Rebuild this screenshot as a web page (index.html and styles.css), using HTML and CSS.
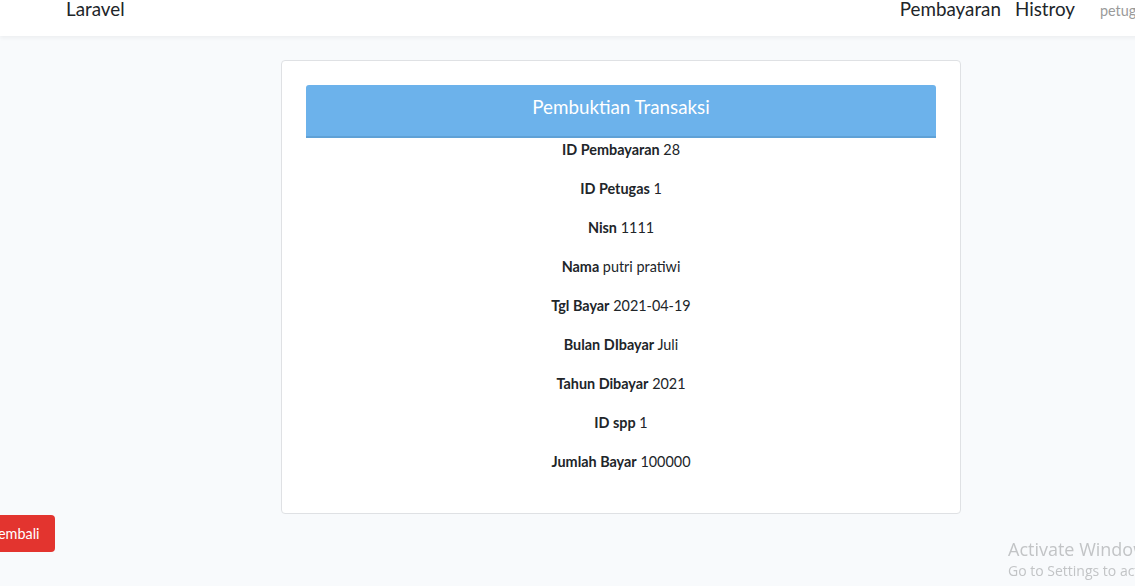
FILE: index.html
```html
<!DOCTYPE html>
<html lang="id">
<head>
<meta charset="utf-8">
<title>Pembuktian Transaksi</title>
<link rel="stylesheet" href="styles.css">
</head>
<body>
<div class="page">
  <nav class="navbar">
    <div class="nav-inner">
      <a class="brand" href="#">Laravel</a>
      <div class="nav-links">
        <a class="nav-link" href="#">Pembayaran</a>
        <a class="nav-link" href="#">Histroy</a>
        <span class="nav-user">petugas</span>
      </div>
    </div>
  </nav>
  <main class="main">
    <div class="card">
      <div class="card-header">Pembuktian Transaksi</div>
      <div class="card-body">
        <p class="row"><strong>ID Pembayaran</strong> 28</p>
        <p class="row"><strong>ID Petugas</strong> 1</p>
        <p class="row"><strong>Nisn</strong> 1111</p>
        <p class="row"><strong>Nama</strong> putri pratiwi</p>
        <p class="row"><strong>Tgl Bayar</strong> 2021-04-19</p>
        <p class="row"><strong>Bulan DIbayar</strong> Juli</p>
        <p class="row"><strong>Tahun Dibayar</strong> 2021</p>
        <p class="row"><strong>ID spp</strong> 1</p>
        <p class="row"><strong>Jumlah Bayar</strong> 100000</p>
      </div>
    </div>
    <a class="btn-back" href="#">Kembali</a>
  </main>
</div>
<div class="watermark">
  <div class="wm-title">Activate Windows</div>
  <div class="wm-sub">Go to Settings to activate Windows.</div>
</div>
</body>
</html>
```
FILE: styles.css
```css
html, body {
  margin: 0;
  padding: 0;
  overflow: hidden;
  background: #f8fafc;
}
body {
  font-family: "Lato", "Noto Sans", sans-serif;
  font-size: 14.4px;
  color: #212529;
  line-height: 1.6;
}
.page {
  width: 1242px;
}
.navbar {
  background: #fff;
  height: 36px;
  box-shadow: 0 2px 4px rgba(0, 0, 0, 0.05);
  overflow: hidden;
}
.nav-inner {
  display: flex;
  align-items: flex-start;
  padding: 0 0 0 66px;
}
.brand {
  font-size: 18.8px;
  color: #212529;
  text-decoration: none;
  line-height: 18px;
}
.nav-links {
  display: flex;
  align-items: baseline;
  line-height: 18px;
  margin-left: auto;
}
.nav-link {
  font-size: 18.8px;
  color: #212529;
  text-decoration: none;
  margin-right: 14px;
}
.nav-link + .nav-link {
  margin-right: 25px;
}
.nav-user {
  font-size: 14.4px;
  color: #9a9a9a;
  width: 142px;
}
.main {
  padding-top: 24px;
}
.card {
  width: 680px;
  box-sizing: border-box;
  margin: 0 auto;
  background: #fff;
  border: 1px solid #dfe1e4;
  border-radius: 4px;
  padding: 24px 24px 24px;
}
.card-header {
  background: #6cb2eb;
  border-bottom: 2px solid #5fa1d6;
  border-radius: 3px 3px 0 0;
  color: #fff;
  text-align: center;
  font-size: 18.8px;
  height: 51px;
  line-height: 44px;
}
.row {
  margin: 0 0 16px;
  text-align: center;
  line-height: 23px;
}
.row strong {
  font-weight: 700;
}
.btn-back {
  display: inline-block;
  margin-left: -23px;
  margin-top: 1px;
  background: #e3342f;
  color: #fff;
  text-decoration: none;
  border-radius: 4px;
  padding: 7px 16px 7px 12px;
  line-height: 23px;
}
.watermark {
  position: fixed;
  left: 1008px;
  top: 537px;
  color: #c2c4c6;
  font-family: "Open Sans", "Noto Sans", sans-serif;
  white-space: nowrap;
}
.wm-title {
  font-size: 18px;
  line-height: 24px;
}
.wm-sub {
  font-size: 14px;
  line-height: 20px;
}
```
